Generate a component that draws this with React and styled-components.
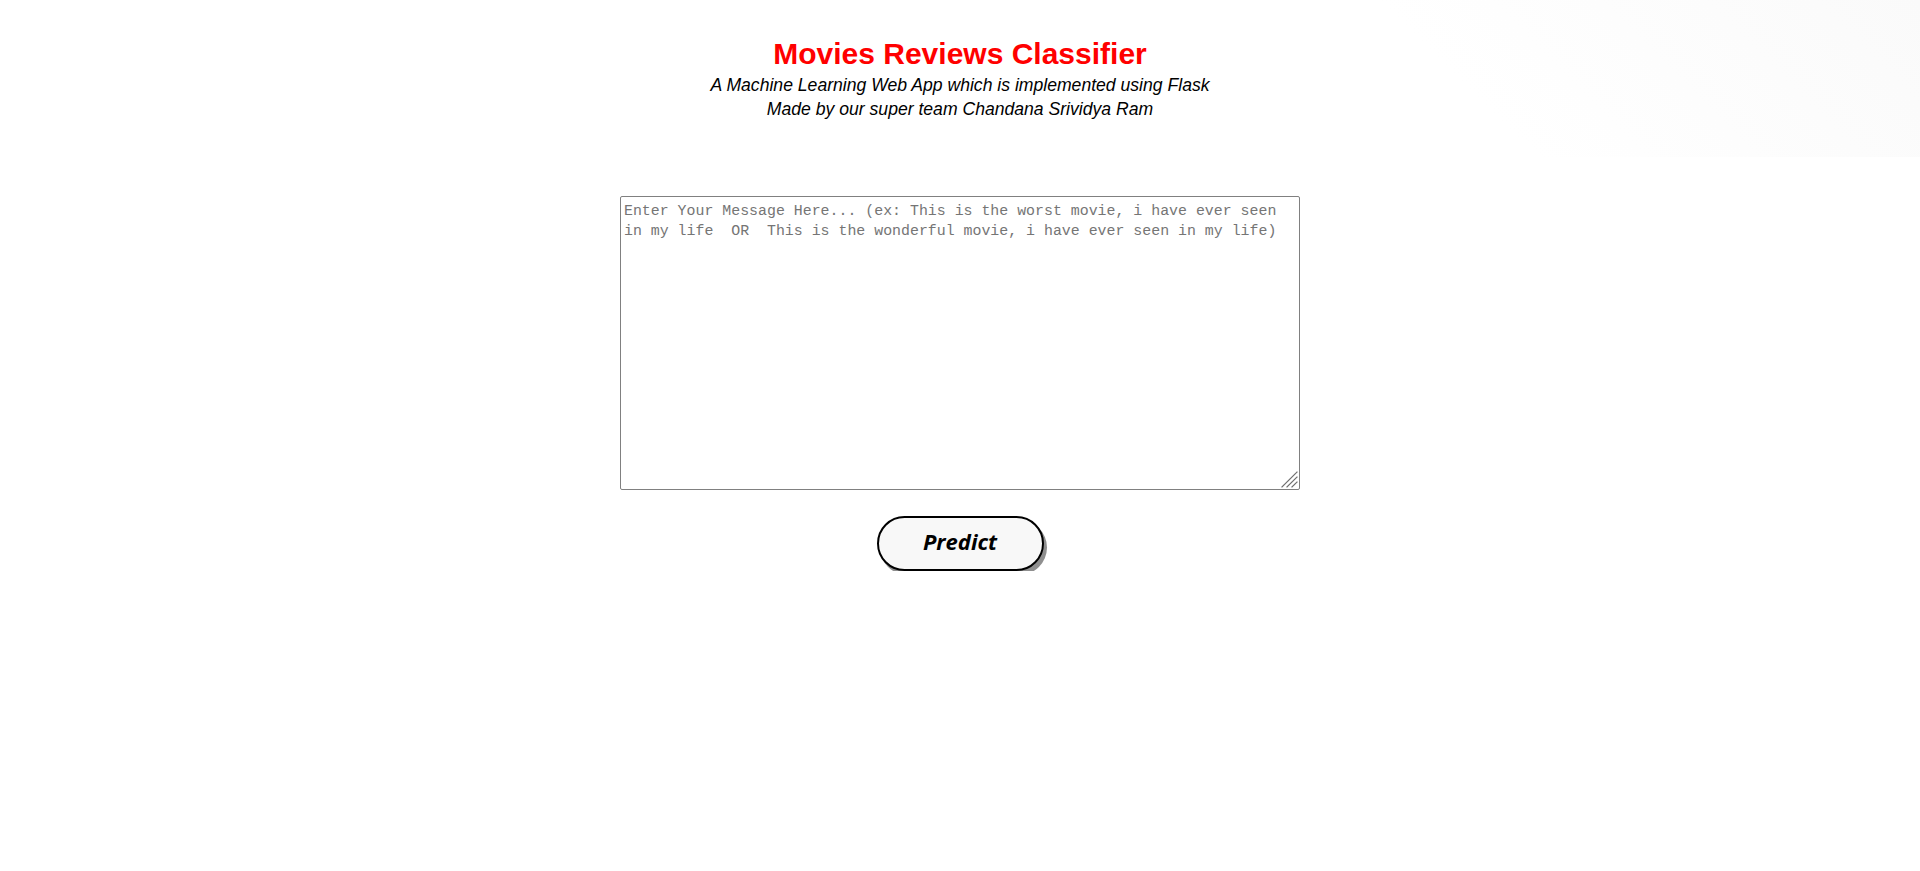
import React from "react";
import styled, { createGlobalStyle } from "styled-components";

const Global = createGlobalStyle`
  html, body { margin: 0; padding: 0; background: #ffffff; }
  body { font-family: "Liberation Sans", Arial, sans-serif; }
`;

const Header = styled.header`
  box-sizing: border-box;
  height: 157px;
  padding-top: 34px;
  text-align: center;
  background: linear-gradient(45deg, #ffffff 74%, #fafafa 100%);
`;

const Title = styled.h1`
  margin: 0;
  font-family: "Liberation Sans", Arial, sans-serif;
  font-weight: 700;
  font-size: 30px;
  line-height: 39px;
  color: #ff0000;
`;

const Subtitle = styled.p`
  margin: 0;
  font-family: "Liberation Sans", Arial, sans-serif;
  font-style: italic;
  font-size: 17.6px;
  line-height: 24px;
  color: #000000;
`;

const Form = styled.form`
  display: flex;
  flex-direction: column;
  align-items: center;
  padding-top: 39px;
`;

const BoxWrap = styled.div`
  position: relative;
  width: 680px;
  height: 294px;
`;

const MessageBox = styled.textarea`
  box-sizing: border-box;
  display: block;
  width: 100%;
  height: 100%;
  margin: 0;
  padding: 5px 2px 2px 3px;
  border: 1px solid #808080;
  border-radius: 2px;
  background: #ffffff;
  font-family: "Liberation Mono", "DejaVu Sans Mono", monospace;
  font-size: 14.9px;
  line-height: 19.5px;
  color: #000;
  resize: none;
  &::placeholder { color: #757575; }
`;

const Grip = styled.svg`
  position: absolute;
  right: 2px;
  bottom: 2px;
  width: 18px;
  height: 18px;
  pointer-events: none;
`;

const PredictButton = styled.button`
  box-sizing: border-box;
  margin-top: 26px;
  width: 167px;
  height: 55px;
  padding: 0 0 5px;
  border: 2px solid #000000;
  border-radius: 28px;
  background: #f8f8f8;
  box-shadow: 3px 4px 0 #8f8f8f;
  font-family: "Open Sans", "Noto Sans", sans-serif;
  font-style: italic;
  font-weight: 700;
  font-size: 22px;
  color: #000000;
  cursor: pointer;
`;

export default function App() {
  return (
    <>
      <Global />
      <Header>
        <Title>Movies Reviews Classifier</Title>
        <Subtitle>A Machine Learning Web App which is implemented using Flask</Subtitle>
        <Subtitle>Made by our super team Chandana Srividya Ram</Subtitle>
      </Header>
      <Form onSubmit={(e) => e.preventDefault()}>
        <BoxWrap>
          <MessageBox
            name="message"
            placeholder="Enter Your Message Here... (ex: This is the worst movie, i have ever seen in my life  OR  This is the wonderful movie, i have ever seen in my life)"
          />
          <Grip viewBox="0 0 18 18">
            <g stroke="#6e6e6e" strokeWidth="1.2" strokeLinecap="square">
              <line x1="2" y1="17" x2="17" y2="2" />
              <line x1="7" y1="17" x2="17" y2="7" />
              <line x1="12" y1="17" x2="17" y2="12" />
            </g>
          </Grip>
        </BoxWrap>
        <PredictButton type="submit">Predict</PredictButton>
      </Form>
    </>
  );
}
